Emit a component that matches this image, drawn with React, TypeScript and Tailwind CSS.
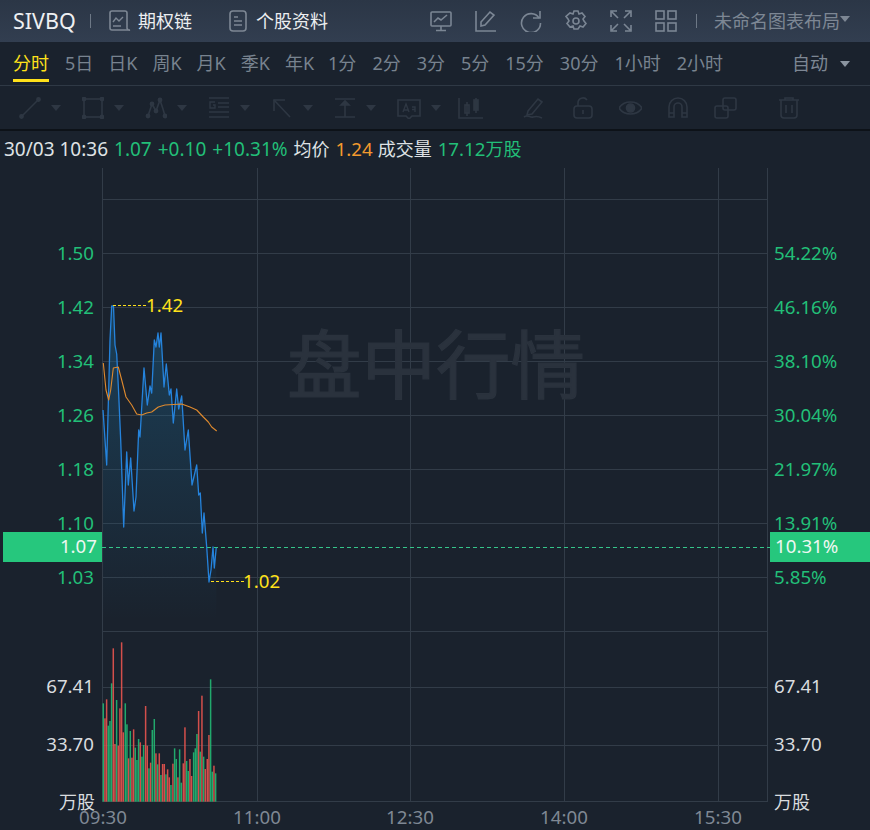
import type { ReactNode } from "react";

const FONT = "font-['Noto_Sans','Noto_Sans_CJK_SC',sans-serif]";

/* ─── Chart data, in page pixels ─────────────────────────────── */
const PRICE: [number, number][] = [
  [103, 410], [106.7, 465], [110, 340], [111.7, 306], [113.5, 306], [115, 345], [116.7, 354], [118.5, 390], [120.7, 440],
  [123.7, 527], [126.7, 452], [128.3, 485], [130.7, 458], [134, 511], [136, 497], [138.7, 430], [140, 437],
  [144, 368], [147.3, 405], [150, 386], [151.7, 393], [154.3, 340], [156, 347], [158, 333], [159.3, 347], [161, 333],
  [164, 387], [166.3, 364], [169.3, 395], [171, 389], [173.3, 423], [176.7, 389], [178.7, 409], [181.7, 396],
  [185, 450], [188.3, 430], [192, 485], [196.7, 465], [198.7, 495], [200.3, 493], [202.3, 533], [204, 513],
  [206.7, 547], [209, 582], [211, 570], [213, 547], [214.3, 568], [216.3, 547],
];

const AVG: [number, number][] = [
  [103.3, 363], [106, 390], [108.7, 400], [110.7, 390], [113.3, 368], [118.3, 367], [121.7, 380], [126, 397],
  [131.7, 405], [136.7, 414], [141.7, 415], [146.7, 413], [151.7, 412], [158.3, 407], [165, 405], [181.7, 404],
  [190, 407], [196.7, 410], [203.3, 417], [208.3, 422], [211.7, 427], [216.7, 431],
];

// [x, top, rising?]
const BARS: [number, number, number][] = [
  [25, 205, 0], [30, 250, 1], [35, 193, 1], [40, 272, 0], [45, 258, 0], [50, 145, 0], [55, 40, 1], [60, 327, 1],
  [65, 195, 0], [70, 332, 1], [75, 220, 1], [80, 22, 1], [85, 292, 1], [91, 205, 0], [96, 268, 0], [101, 370, 1],
  [106, 288, 0], [111, 368, 1], [116, 283, 1], [121, 338, 0], [126, 375, 0], [131, 312, 0], [136, 322, 1], [141, 365, 0],
  [146, 330, 0], [152, 213, 1], [157, 332, 1], [162, 400, 0], [167, 383, 1], [172, 285, 0], [178, 252, 0], [183, 355, 1],
  [188, 388, 0], [193, 355, 1], [198, 420, 0], [203, 387, 1], [208, 387, 1], [213, 418, 0], [218, 403, 1], [223, 427, 1],
  [228, 450, 0], [234, 386, 1], [239, 340, 0], [244, 372, 0], [249, 427, 1], [254, 343, 0], [259, 443, 0], [265, 385, 1],
  [270, 277, 1], [275, 378, 0], [280, 408, 0], [285, 372, 1], [290, 423, 1], [296, 352, 0], [301, 340, 0], [306, 297, 0],
  [311, 228, 1], [316, 350, 0], [321, 182, 1], [326, 365, 0], [331, 402, 1], [337, 372, 1], [342, 300, 1], [347, 133, 0],
  [352, 410, 0], [357, 392, 1], [362, 415, 0],
];

const H_LINES = [199, 253, 307, 361, 415, 469, 523, 577, 631, 687, 745, 801];
const V_LINES = [102.5, 257.5, 410.5, 564.5, 718.5, 767.5];

const PRICES: [string, string, number][] = [
  ["1.50", "54.22%", 253], ["1.42", "46.16%", 307], ["1.34", "38.10%", 361], ["1.26", "30.04%", 415],
  ["1.18", "21.97%", 469], ["1.10", "13.91%", 523], ["1.03", "5.85%", 577],
];

const toPath = (pts: [number, number][]) => pts.map(([x, y], i) => `${i ? "L" : "M"}${x} ${y}`).join(" ");

/* ─── Small bits ─────────────────────────────────────────────── */
function Icon({ w = 22, children }: { w?: number; children: ReactNode }) {
  return (
    <svg width={w} height={22} viewBox={`0 0 ${w} 22`} fill="none" stroke="currentColor" strokeWidth="1.6" className="shrink-0">
      {children}
    </svg>
  );
}

function Caret({ className }: { className: string }) {
  return <span className={`w-0 h-0 border-x-[5px] border-x-transparent border-t-[6px] ${className}`} />;
}

const TABS_A = ["5日", "日K", "周K", "月K", "季K", "年K"];
const TABS_B = ["1分", "2分", "3分", "5分", "15分", "30分", "1小时", "2小时"];

const DRAW_TOOLS: { key: string; icon: ReactNode }[] = [
  { key: "line", icon: <><path d="M3 19 19 3" /><circle cx="2.5" cy="19.5" r="1.6" fill="currentColor" /><circle cx="19.5" cy="2.5" r="1.6" fill="currentColor" /></> },
  { key: "rect", icon: <><rect x="2" y="2" width="18" height="18" /><circle cx="2" cy="2" r="1.6" fill="currentColor" /><circle cx="20" cy="2" r="1.6" fill="currentColor" /><circle cx="2" cy="20" r="1.6" fill="currentColor" /><circle cx="20" cy="20" r="1.6" fill="currentColor" /></> },
  { key: "wave", icon: <><path d="M3 19 7 7l4 7 4-11 3 9 2 7" /><circle cx="3" cy="19" r="1.6" fill="currentColor" /><circle cx="7" cy="7" r="1.6" fill="currentColor" /><circle cx="11" cy="14" r="1.6" fill="currentColor" /><circle cx="15" cy="3" r="1.6" fill="currentColor" /><circle cx="20" cy="19" r="1.6" fill="currentColor" /></> },
  { key: "fib", icon: <><path d="M1 1h20M10 6h11M10 10h11M1 15h20M1 20h20" /><path d="M7 5H2v6h5V8H5" strokeWidth="1.4" /></> },
  { key: "arrow", icon: <><path d="M3 3 19 20" /><path d="M3 14V3h11" /></> },
  { key: "beam", icon: <><path d="M1 2h20M1 20h20M11 5v15" /><path d="M7 8l4-4 4 4z" fill="currentColor" /></> },
  { key: "text", icon: <><path d="M1 3h22v16h-8l-3 3-3-3H1z" /><path d="M6 15l3-8 3 8M7 13h4M18 15v-5h-3M15 12.500h3" strokeWidth="1.4" /></> },
];

const DRAW_TOOLS_2: { key: string; x: string; w?: number; icon: ReactNode }[] = [
  { key: "pencil", x: "ml-[39px]", icon: <><path d="M5 14 15 2l4 3-10 12-5 1z" /><path d="M1 20c4-3 6 1 9 0s5-1 9 1" /></> },
  { key: "lock", x: "ml-[27px]", icon: <><rect x="2" y="9" width="18" height="12" rx="3" /><path d="M6 9V6a5 5 0 0 1 9-3M11 13v4" /></> },
  { key: "eye", x: "ml-[25px]", w: 23, icon: <><path d="M0 11c5-8 18-8 23 0-5 8-18 8-23 0z" /><circle cx="11.500" cy="11" r="4" fill="currentColor" /></> },
  { key: "magnet", x: "ml-[25px]", icon: <><path d="M2 20V10a9 9 0 0 1 18 0v10h-5V10a4 4 0 0 0-8 0v10z" /><path d="M2 16h5M15 16h5" /></> },
  { key: "copy", x: "ml-[25px]", w: 23, icon: <><rect x="9" y="1" width="13" height="12" rx="2" /><rect x="1" y="9" width="13" height="12" rx="2" /></> },
  { key: "trash", x: "ml-[41px]", icon: <><path d="M1 3h20M7 3V1h8v2M3 3v15a3 3 0 0 0 3 3h10a3 3 0 0 0 3-3V3M8 8v8M14 8v8" /></> },
];

/* ─── Chart ──────────────────────────────────────────────────── */
function Chart() {
  const txt = `${FONT} text-[18.700px]`;
  const cjk = `${FONT} text-[18px]`;
  return (
    <svg width={870} height={662} viewBox="0 168 870 662" className="block">
      <defs>
        <linearGradient id="area" x1="0" y1="0" x2="0" y2="1">
          <stop offset="0%" stopColor="#1d6d9a" stopOpacity="0.4" />
          <stop offset="100%" stopColor="#1d6d9a" stopOpacity="0" />
        </linearGradient>
      </defs>

      {H_LINES.map((y) => <line key={y} x1={102} x2={768} y1={y + 0.5} y2={y + 0.5} stroke="#323c48" />)}
      {V_LINES.map((x) => <line key={x} x1={x} x2={x} y1={168} y2={802} stroke="#323c48" />)}

      <text x={287} y={393} fill="#2a323d" stroke="#2a323d" strokeWidth="1.2" className={`${FONT} text-[74.500px]`}>盘中行情</text>

      <path d={`${toPath(PRICE)} L216.300 620 L103 620 Z`} fill="url(#area)" />
      <path d={toPath(PRICE)} fill="none" stroke="#2583dc" strokeWidth="1.3" strokeLinejoin="round" />
      <path d={toPath(AVG)} fill="none" stroke="#df8a2e" strokeWidth="1.1" strokeLinejoin="round" />

      {/* high / low */}
      <line x1={113} x2={147} y1={305.5} y2={305.5} stroke="#ffe11a" strokeDasharray="3 2" />
      <text x={146} y={312} fill="#ffe11a" className={txt}>1.42</text>
      <line x1={211} x2={244} y1={581.5} y2={581.5} stroke="#ffe11a" strokeDasharray="3 2" />
      <text x={243} y={588} fill="#ffe11a" className={txt}>1.02</text>

      {/* volume */}
      {BARS.map(([x, top, up]) => (
        <rect
          key={x}
          x={95 + x / 3 - 0.8}
          y={635 + top / 3}
          width={1.5}
          height={(500 - top) / 3}
          fill={up ? "#e8544f" : "#22b873"}
          fillOpacity={0.9}
        />
      ))}

      {/* last price */}
      <line x1={102} x2={770} y1={547.5} y2={547.5} stroke="#35c58a" strokeDasharray="4 3" />
      <rect x={3} y={532} width={99} height={30} fill="#26c77d" />
      <rect x={770} y={532} width={100} height={30} fill="#26c77d" />
      <text x={97} y={553} textAnchor="end" fill="#eef7f2" className={txt}>1.07</text>
      <text x={775} y={553} fill="#eef7f2" className={txt}>10.31%</text>

      {PRICES.map(([p, pct, y]) => (
        <g key={p}>
          <text x={94} y={y + 7} textAnchor="end" fill="#22bf78" className={txt}>{p}</text>
          <text x={774} y={y + 7} fill="#22bf78" className={txt}>{pct}</text>
        </g>
      ))}

      {[["67.41", 693], ["33.70", 751]].map(([v, y]) => (
        <g key={v}>
          <text x={94} y={y} textAnchor="end" fill="#d9dcdf" className={txt}>{v}</text>
          <text x={774} y={y} fill="#d9dcdf" className={txt}>{v}</text>
        </g>
      ))}
      <text x={95} y={809} textAnchor="end" fill="#d9dcdf" className={cjk}>万股</text>
      <text x={774} y={809} fill="#d9dcdf" className={cjk}>万股</text>

      {[["09:30", 103], ["11:00", 257], ["12:30", 410], ["14:00", 564], ["15:30", 718]].map(([t, x]) => (
        <text key={t} x={x} y={824} textAnchor="middle" fill="#7f8894" className={txt}>{t}</text>
      ))}
    </svg>
  );
}

/* ─── Page ───────────────────────────────────────────────────── */
export default function App() {
  return (
    <div className={`w-[870px] h-[830px] overflow-hidden bg-[#1a222d] ${FONT}`}>
      {/* Header */}
      <div className="h-[42px] flex items-center bg-gradient-to-b from-[#2b3646] to-[#323e50] text-[18px]">
        <span className="ml-[13px] w-[62px] text-[21.500px] text-[#eef0f2]">SIVBQ</span>
        <span className="ml-[15px] w-px h-[14px] bg-[#6d7886]" />
        <span className="ml-[18px] text-[#7d8794]">
          <Icon>
            <path d="M18 17V3a2 2 0 0 0-2-2H3a2 2 0 0 0-2 2v15a2 2 0 0 0 2 2h18a2.500 2.500 0 0 1-3-3z" />
            <path d="M4 12l3-4 3 3 4-4M4 16h8" strokeWidth="1.4" />
          </Icon>
        </span>
        <span className="ml-[7px] w-[54px] text-[#eceef0]">期权链</span>
        <span className="ml-[37px] text-[#7d8794]">
          <Icon w={18}>
            <rect x="1" y="1" width="16" height="20" rx="3" />
            <path d="M5 7h4M5 11h8M5 15h8" />
          </Icon>
        </span>
        <span className="ml-[9px] w-[72px] text-[#eceef0]">个股资料</span>
        <div className="ml-[102px] flex gap-[23px] text-[#7b8694]">
          <Icon>
            <rect x="1" y="2" width="20" height="14" rx="1" />
            <path d="M4 12l4-4 3 2 6-5M11 16v4M6 20.500h10" />
          </Icon>
          <Icon>
            <path d="M1 1v20h20" />
            <path d="M6 12 15 2l4 3-9 10-4 1z" />
          </Icon>
          <Icon>
            <path d="M19 8A9.500 9.500 0 1 0 20.500 13" />
            <path d="M20 1v7h-7" />
          </Icon>
          <Icon>
            <path d="M9 1h4l1 3 3-1 3 3.500-2 2.500 1 2 2 2.500-3 3.500-3-1-2 3H9l-1-3-3 1-3-3.500 2-2.500-1-2L1 6.500 5 3l3 1z" />
            <circle cx="11" cy="11" r="3" />
          </Icon>
          <Icon>
            <path d="M1 7V1h6M15 1h6v6M21 15v6h-6M7 21H1v-6M2 2l6 6M20 2l-6 6M20 20l-6-6M2 20l6-6" />
          </Icon>
          <Icon>
            <rect x="1" y="1" width="8" height="8" />
            <rect x="13" y="1" width="8" height="8" />
            <rect x="1" y="13" width="8" height="8" />
            <rect x="13" y="13" width="8" height="8" />
          </Icon>
        </div>
        <span className="ml-[19px] w-px h-[14px] bg-[#6d7886]" />
        <span className="ml-[17px] text-[#7d8794] whitespace-nowrap">未命名图表布局</span>
        <Caret className="-mt-1 border-t-[#7d8794]" />
      </div>

      {/* Periods */}
      <div className="h-[44px] flex items-center border-b border-[#2f3945] text-[18px] text-[#78838f]">
        <span className="relative ml-[13px] mr-[16px] text-[#ffe11a]">
          分时
          <span className="absolute left-0 right-0 top-[29px] h-[3px] bg-[#ffe11a]" />
        </span>
        <div className="flex gap-[15px] whitespace-nowrap">
          {TABS_A.map((t) => <span key={t}>{t}</span>)}
        </div>
        <div className="ml-[14px] flex gap-[16px] whitespace-nowrap">
          {TABS_B.map((t) => <span key={t}>{t}</span>)}
        </div>
        <span className="ml-auto text-[#7d8794]">自动</span>
        <Caret className="ml-[12px] mr-[20px] border-t-[#8b95a0]" />
      </div>

      {/* Drawing tools */}
      <div className="h-[45px] flex items-center pl-[19px] text-[#2e3743] border-b-2 border-[#0d1218]">
        {DRAW_TOOLS.map((tool) => (
          <div key={tool.key} className="w-[63px] flex items-center gap-[10px]">
            <Icon w={tool.key === "text" ? 24 : 22}>{tool.icon}</Icon>
            <Caret className="border-x-[3px] border-t-[4px] border-t-[#2e3743]" />
          </div>
        ))}
        <span className="-ml-[2px]">
          <Icon w={26}>
            <path d="M1 1v20h24" />
            <rect x="7" y="8" width="4" height="8" />
            <rect x="16" y="3" width="4" height="10" fill="currentColor" />
            <path d="M9 5v14M18 1v15" />
          </Icon>
        </span>
        {DRAW_TOOLS_2.map((tool) => (
          <span key={tool.key} className={tool.x}>
            <Icon w={tool.w ?? 22}>{tool.icon}</Icon>
          </span>
        ))}
      </div>

      {/* Quote line */}
      <div className="h-[37px] flex items-center pl-[4px] gap-[6px] text-[18px] text-[#dfe2e5] whitespace-nowrap">
        <span className="text-[19px]">30/03 10:36</span>
        <span className="text-[19px] text-[#22bf78]">1.07</span>
        <span className="text-[19px] text-[#22bf78]">+0.10</span>
        <span className="text-[19px] text-[#22bf78]">+10.31%</span>
        <span>均价</span>
        <span className="text-[18.700px] text-[#f29a2e]">1.24</span>
        <span className="-ml-[1px]">成交量</span>
        <span className="text-[#22bf78]"><span className="text-[18.700px]">17.12</span>万股</span>
      </div>

      <Chart />
    </div>
  );
}
